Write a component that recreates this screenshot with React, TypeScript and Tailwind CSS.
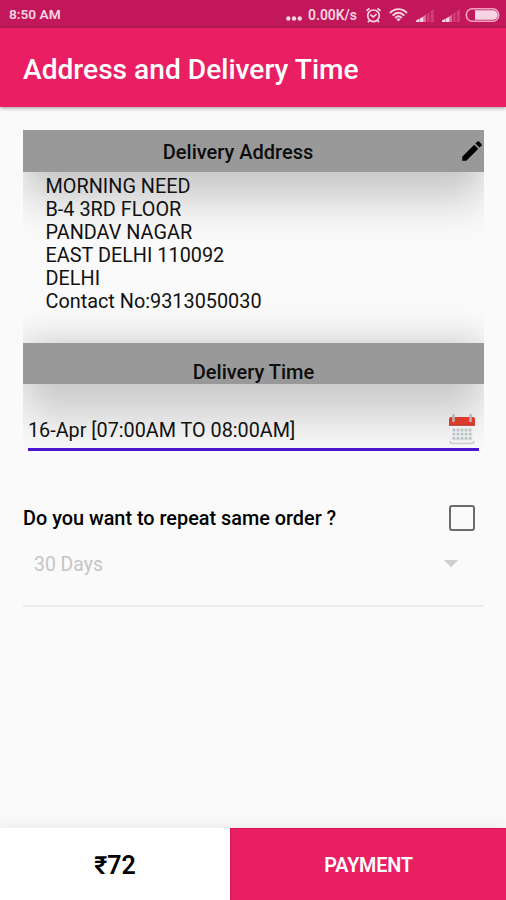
import { MdEdit } from "react-icons/md";

const address = [
  "MORNING NEED",
  "B-4 3RD FLOOR",
  "PANDAV NAGAR",
  "EAST DELHI 110092",
  "DELHI",
  "Contact No:9313050030",
];

function SignalIcon() {
  return (
    <svg width="18" height="13" viewBox="0 0 18 13" fill="#f8d5e2">
      <path d="M0 13V11.4L3.6 9.6V13ZM4 13V9.4L7.6 7.2V13Z" />
      <path d="M8.2 13V7L9.8 5.6V13Z" opacity=".6" />
      <path d="M11 13V4.8L13.6 3V13ZM14.8 13V2.2L17.8 0V13Z" opacity=".2" />
    </svg>
  );
}

function StatusBar() {
  return (
    <div className="flex h-7 items-center bg-[#c2185b] pt-0.5 text-[#f8d5e2]">
      <span className="ml-[9px] text-[13.7px] font-semibold leading-none">8:50 AM</span>
      <div className="ml-auto flex items-center pr-[6px]">
        <svg width="16" height="14" viewBox="0 0 16 14" fill="currentColor">
          <circle cx="2.3" cy="10.5" r="2.2" />
          <circle cx="8" cy="10.5" r="2.2" />
          <circle cx="13.7" cy="10.5" r="2.2" />
        </svg>
        <span className="ml-[6px] w-[50px] whitespace-nowrap pt-px text-[13.9px] font-semibold leading-none">0.00K/s</span>
        <svg className="ml-[7px] -mt-px" width="17" height="16" viewBox="0 0 16 16" fill="none" stroke="currentColor" strokeWidth="1.7">
          <circle cx="8" cy="8.8" r="5.8" />
          <path d="M1 3.8 4 1.3M15 3.8 12 1.3M3.8 13.8 2.4 15.2M12.2 13.8 13.6 15.2M4.8 7.6 7.8 9.9 11 7.2" />
        </svg>
        <svg className="ml-[7px] -mt-px" width="19" height="14" viewBox="0 0 19 14" fill="none" stroke="currentColor" strokeWidth="1.9">
          <path d="M1 5C6-.2 13-.2 18 5M3.6 7.6C7.2 3.8 11.8 3.8 15.4 7.6M6.2 10C8.3 7.9 10.7 7.9 12.8 10" />
          <path d="M7.4 11.3C8.8 10 10.2 10 11.6 11.3L9.5 13.6Z" fill="currentColor" stroke="none" />
        </svg>
        <div className="ml-[8px] flex gap-[8px]">
          <SignalIcon />
          <SignalIcon />
        </div>
        <svg className="ml-[5px] -mt-px" width="35" height="14" viewBox="0 0 34 14">
          <rect x=".8" y=".8" width="32.4" height="12.4" rx="6" fill="none" stroke="#efa5c2" strokeWidth="1.6" />
          <path d="M9.5 2.3H27.5A4.6 4.6 0 0 1 27.5 11.7H9.5Z" fill="#f8d5e2" />
        </svg>
      </div>
    </div>
  );
}

function CalendarIcon() {
  return (
    <svg width="28" height="31" viewBox="0 0 28 31">
      <path d="M2 11H26V27Q26 29.5 24 29.5H4Q2 29.5 2 27Z" fill="#eff0ef" />
      <path d="M2 27Q2 29.5 4 29.5H24Q26 29.5 26 27" fill="none" stroke="#c6cfcb" strokeWidth="1.4" />
      <path d="M1 5Q1 3 3 3H25Q27 3 27 5V11.5H1Z" fill="#dc3a2b" />
      <path d="M1 10.5H27V11.7H1Z" fill="#b9382c" />
      <path d="M5.5 1V7M22.5 1V7" stroke="#b9b3b1" strokeWidth="2.6" strokeLinecap="round" />
      <path
        d="M4.5 16H23.5M4.5 20.2H23.5M4.5 24.4H23.5"
        stroke="#bcc5c8"
        strokeWidth="2.8"
        strokeDasharray="2.8 1.25"
      />
    </svg>
  );
}

export default function App() {
  return (
    <div className="flex h-[900px] w-[506px] flex-col overflow-hidden bg-[#fafafa] font-[Roboto,sans-serif] text-black">
      <StatusBar />
      <header className="z-10 flex h-[79px] shrink-0 items-center bg-[#e91e63] pl-[23px] pt-[6px] shadow-[0_1px_4px_rgba(0,0,0,0.4)]">
        <h1 className="whitespace-nowrap text-[28.15px] font-medium leading-none text-white">
          Address and Delivery Time
        </h1>
      </header>

      <main className="flex flex-1 flex-col px-[22px] pt-[23px] pl-[23px]">
        <section className="h-[213px] overflow-hidden">
          <div className="flex h-[41.5px] items-center bg-[#999] shadow-[0_32px_42px_-2px_rgba(0,0,0,0.19),0_0_32px_rgba(0,0,0,0.18)]">
            <h2 className="ml-[2px] w-[426px] pt-0.5 text-center text-[20px] font-medium leading-none text-[#0d0d0d]">
              Delivery Address
            </h2>
            <MdEdit className="ml-auto -mr-[1px] size-[26px]" />
          </div>
          <div className="relative pl-[22.5px] pt-[3.5px] text-[#111]">
            {address.map((line) => (
              <p key={line} className="whitespace-nowrap text-[19.85px] leading-[23px]">
                {line}
              </p>
            ))}
          </div>
        </section>

        <section className="-mt-[41px] h-[149px] overflow-hidden pt-[41px]">
          <div className="h-[41px] bg-[#999] pt-[19px] shadow-[0_38px_44px_-2px_rgba(0,0,0,0.18),0_0_38px_rgba(0,0,0,0.22)]">
            <h2 className="text-center text-[20px] font-medium leading-none text-[#0d0d0d]">Delivery Time</h2>
          </div>
          <div className="relative mx-[5px] flex h-[67px] items-center justify-between border-b-[3px] border-[#4a15d0] pt-[26px] pr-[3px]">
            <span className="whitespace-nowrap pt-[3px] text-[19.8px] text-[#111]">16-Apr [07:00AM TO 08:00AM]</span>
            <CalendarIcon />
          </div>
        </section>

        <div className="mt-[53px] flex h-[27px] items-center justify-between pr-[9px]">
          <span className="whitespace-nowrap pt-[2px] text-[19.85px] font-medium">Do you want to repeat same order ?</span>
          <span className="size-[26px] rounded-[3px] border-[2.5px] border-[#6b6b6b]" />
        </div>
        <div className="flex h-[76px] items-start justify-between border-b-2 border-[#ebebeb] pt-[19px] pr-[26px] pl-[11px] text-[#c5c5c5]">
          <span className="text-[19.4px] leading-[29px]">30 Days</span>
          <svg className="mt-[10px]" width="14" height="8" viewBox="0 0 14 8" fill="#cfcfcf">
            <path d="M0 0H14L7 7.5Z" />
          </svg>
        </div>
      </main>

      <footer className="flex h-[72px] shrink-0 shadow-[0_-2px_16px_rgba(0,0,0,0.07)]">
        <div className="flex w-[230px] items-center justify-center bg-white pt-1 text-[25px] font-semibold">₹72</div>
        <button className="flex-1 border-t border-l border-[#d81452] bg-[#e91e63] pt-[3px] text-[19.8px] font-semibold tracking-[-0.2px] text-white">
          PAYMENT
        </button>
      </footer>
    </div>
  );
}
